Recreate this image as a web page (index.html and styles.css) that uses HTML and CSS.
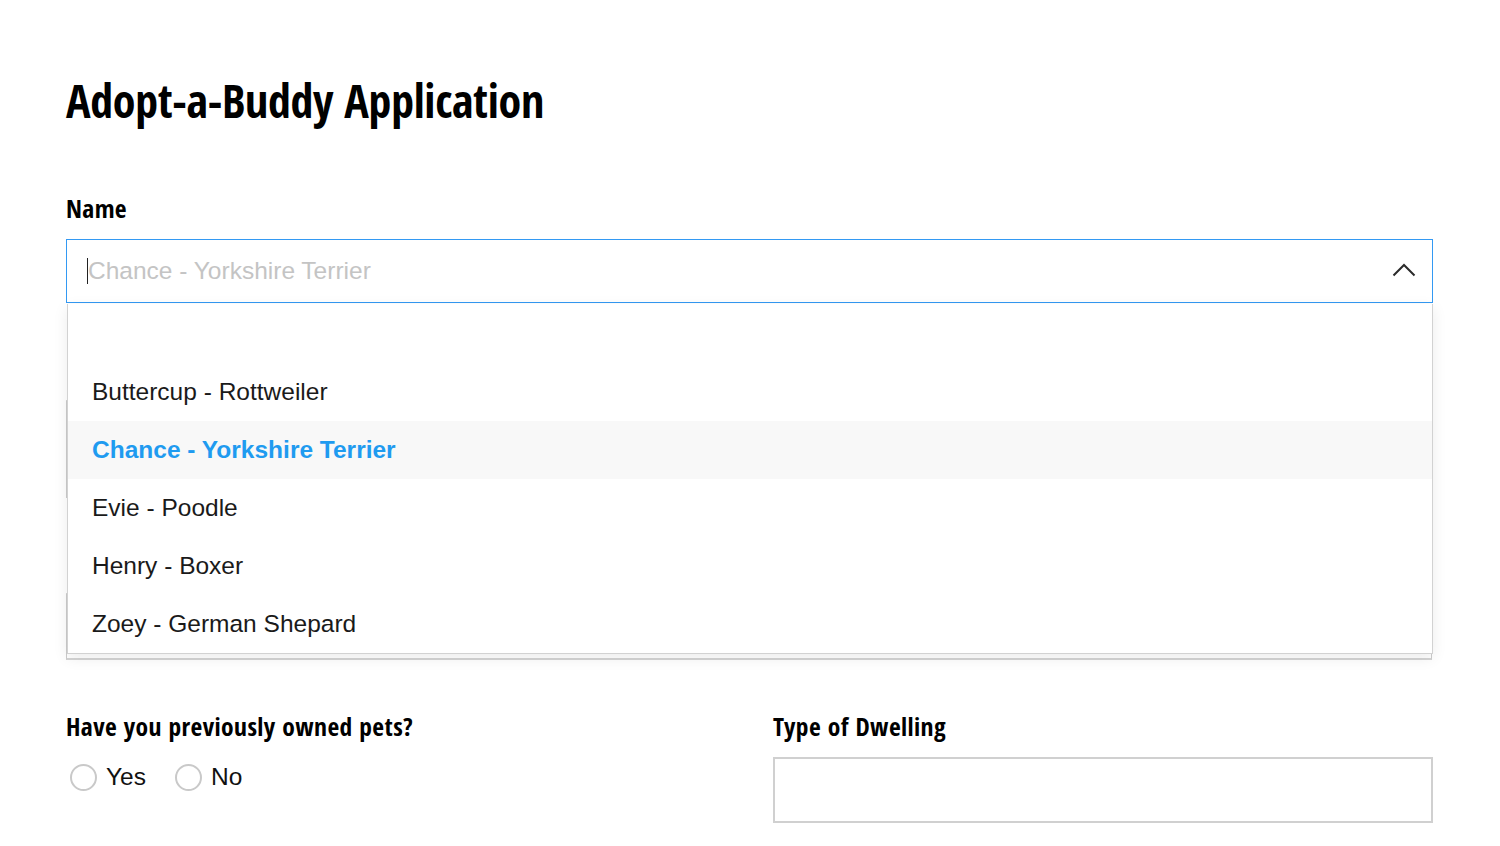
FILE: index.html
```html
<!DOCTYPE html>
<html lang="en">
<head>
<meta charset="utf-8">
<title>Adopt-a-Buddy Application</title>
<link rel="stylesheet" href="styles.css">
</head>
<body>
<main class="page">
  <h1 class="title">Adopt-a-Buddy Application</h1>

  <div class="field name-field">
    <label class="label">Name</label>
    <div class="combo">
      <span class="caret"></span>
      <span class="placeholder">Chance - Yorkshire Terrier</span>
      <svg class="chevron" width="24" height="14" viewBox="0 0 24 14"><path d="M1.5 12.5 L12 2 L22.5 12.5" fill="none" stroke="#2b2b2b" stroke-width="2"/></svg>
    </div>

    <div class="under">
      <div class="under-box box-a"></div>
      <div class="under-box box-b"></div>
    </div>

    <ul class="popup">
      <li class="item empty"></li>
      <li class="item">Buttercup - Rottweiler</li>
      <li class="item selected">Chance - Yorkshire Terrier</li>
      <li class="item">Evie - Poodle</li>
      <li class="item">Henry - Boxer</li>
      <li class="item">Zoey - German Shepard</li>
    </ul>
  </div>

  <div class="row">
    <div class="col">
      <div class="label">Have you previously owned pets?</div>
      <div class="radios">
        <label class="radio"><span class="circle"></span>Yes</label>
        <label class="radio"><span class="circle"></span>No</label>
      </div>
    </div>
    <div class="col">
      <div class="label">Type of Dwelling</div>
      <div class="textbox"></div>
    </div>
  </div>
</main>
</body>
</html>
```

FILE: styles.css
```css
html, body {
  margin: 0;
  padding: 0;
  background: #ffffff;
}

body {
  font-family: "Liberation Sans", Arial, sans-serif;
  color: #111;
}

.page {
  padding: 71px 67px 0 66px;
}

.title {
  margin: 0;
  font-family: "Open Sans Condensed", "Open Sans", sans-serif;
  font-stretch: 75%;
  font-weight: 700;
  font-size: 46px;
  line-height: 58px;
  letter-spacing: -0.3px;
  color: #000;
}

.label {
  display: block;
  font-family: "Open Sans Condensed", "Open Sans", sans-serif;
  font-stretch: 75%;
  font-weight: 700;
  font-size: 25.5px;
  line-height: 30px;
  letter-spacing: 0.4px;
  color: #000;
}

.name-field {
  position: relative;
  margin-top: 64px;
}

.combo {
  margin-top: 16px;
  height: 62px;
  border: 1.5px solid #3399f3;
  display: flex;
  align-items: center;
  padding: 0 16px 0 20px;
  box-sizing: content-box;
}

.caret {
  width: 1px;
  height: 26px;
  background: #222;
}

.placeholder {
  flex: 1;
  font-size: 24.5px;
  color: #c4c4c4;
}

.chevron {
  display: block;
  margin-top: -2px;
}

.under {
  padding-top: 97px;
  padding-right: 1px;
}

.under-box {
  border: 1px solid #cccccc;
  border-top-color: #ddd;
}

.box-a {
  height: 96px;
}

.box-b {
  margin-top: 95px;
  height: 64px;
  border-bottom: 2px solid #d4d4d4;
}

.popup {
  position: absolute;
  top: 111px;
  left: 1px;
  right: 0;
  margin: 0;
  padding: 0;
  list-style: none;
  background: #fff;
  border: 1px solid #d2d2d2;
  border-top: 0;
  box-shadow: 0 4px 14px rgba(0, 0, 0, 0.08);
}

.item {
  height: 58px;
  line-height: 58px;
  padding-left: 24px;
  font-size: 24.5px;
  color: #1a1a1a;
}

.item.empty {
  height: 59px;
}

.item.selected {
  background: #f8f8f8;
  color: #1f9bf0;
  font-weight: 700;
}

.row {
  display: grid;
  grid-template-columns: 1fr 660px;
  column-gap: 47px;
  margin-top: 51px;
}

.radios {
  display: flex;
  align-items: center;
  gap: 29px;
  margin-top: 22px;
  padding-left: 4px;
}

.radio {
  display: flex;
  align-items: center;
  gap: 9px;
  font-size: 24.5px;
  color: #111;
}

.circle {
  width: 23px;
  height: 23px;
  border: 2px solid #c9c9c9;
  border-radius: 50%;
  background: #fff;
}

.textbox {
  margin-top: 16px;
  height: 62px;
  border: 2px solid #d0d0d0;
}
```
